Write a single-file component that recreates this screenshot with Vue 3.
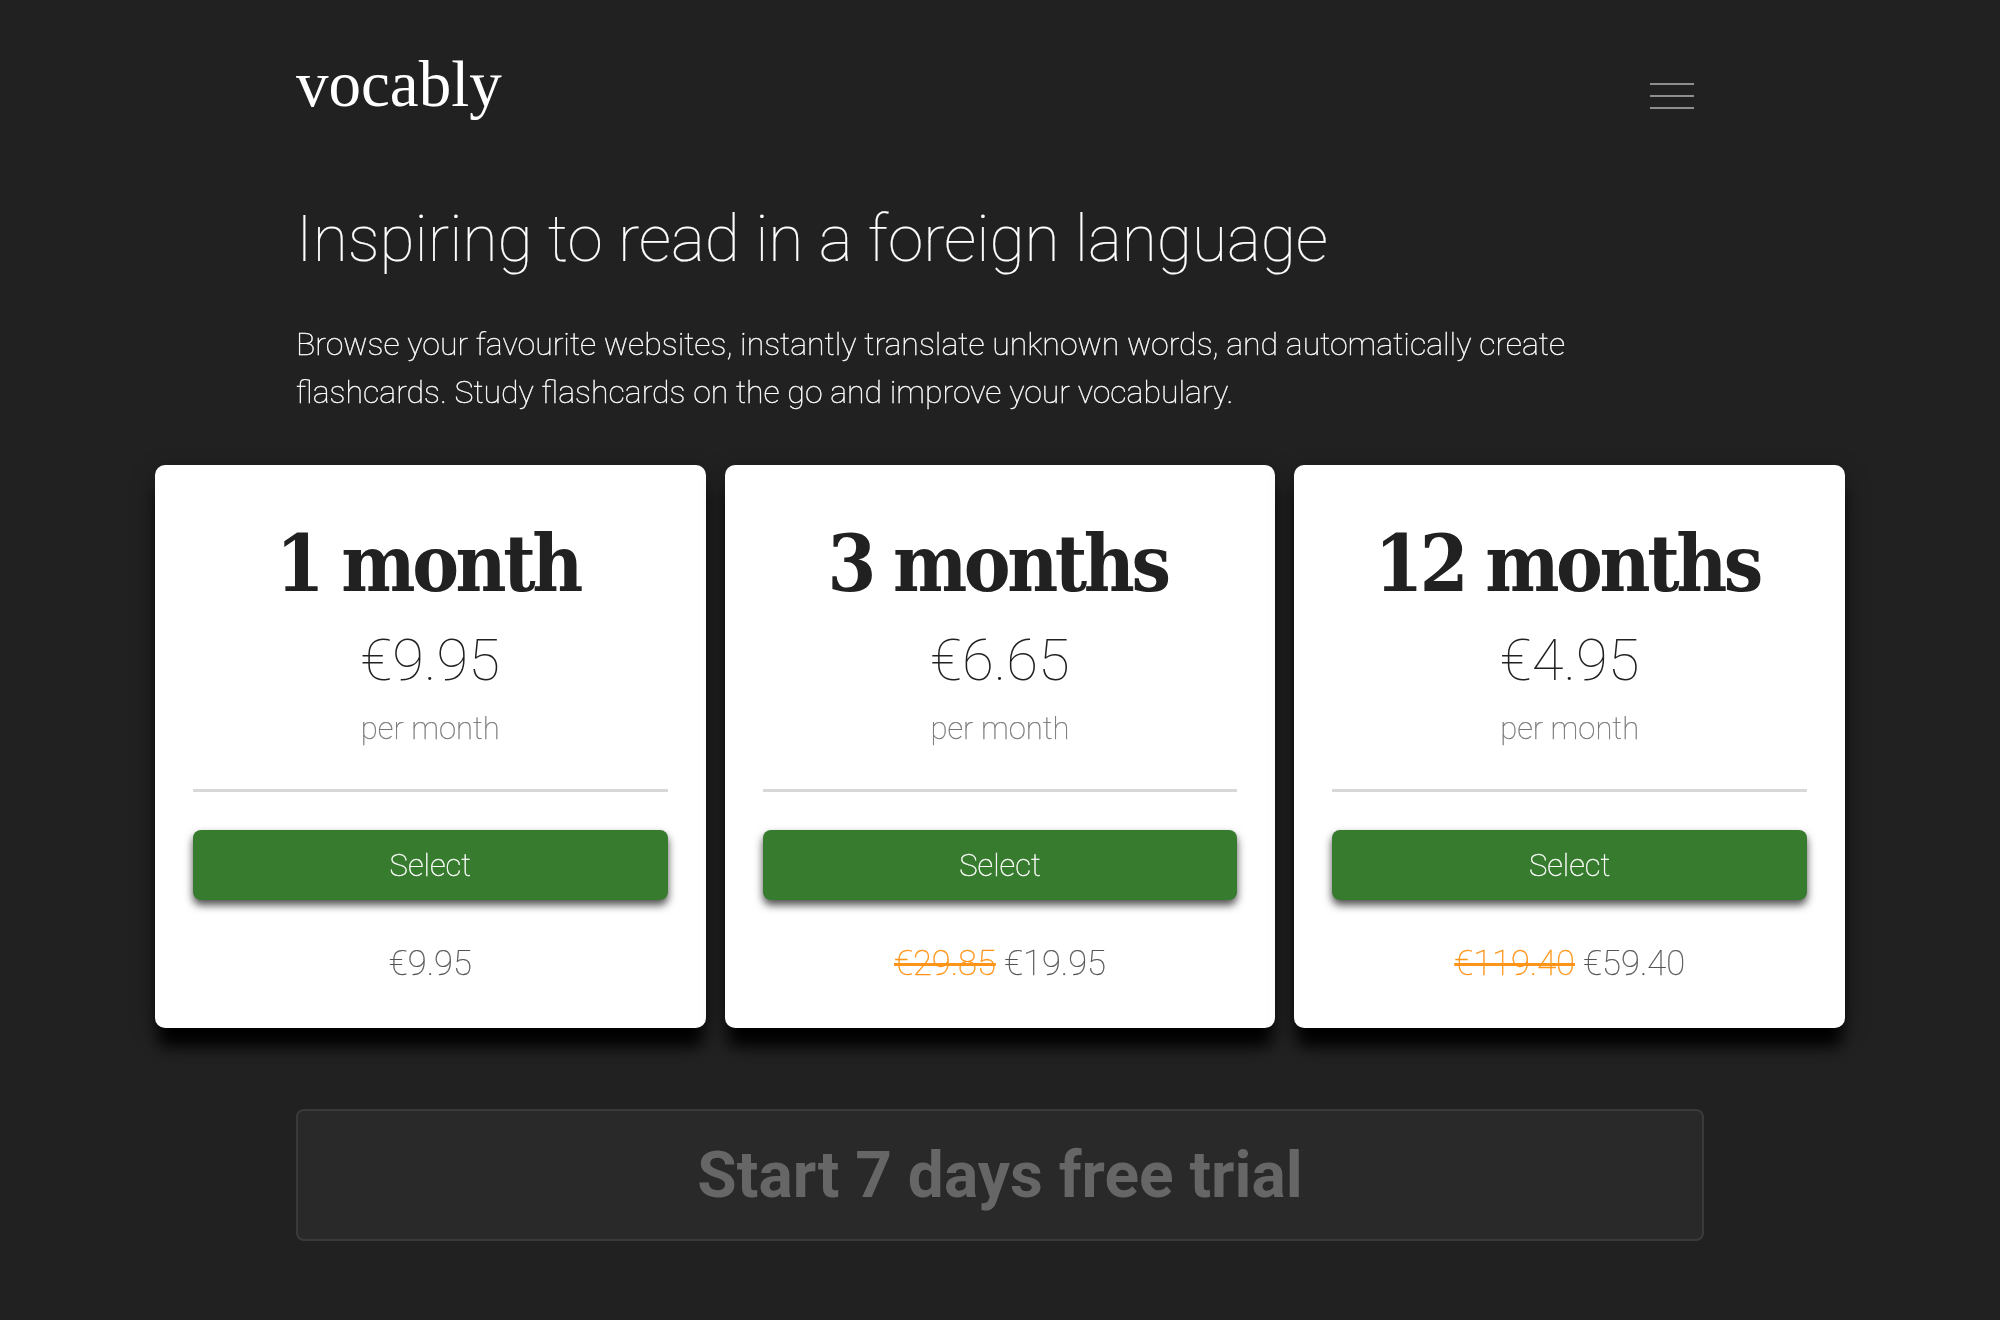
<template>
  <div class="page">
    <div class="intro">
      <header class="top">
        <div class="logo">vocably</div>
        <button class="burger" aria-label="Menu"><span></span><span></span><span></span></button>
      </header>
      <h1>Inspiring to read in a foreign language</h1>
      <p class="lead">Browse your favourite websites, instantly translate unknown words, and automatically create flashcards. Study flashcards on the go and improve your vocabulary.</p>
    </div>
    <div class="plans">
      <div v-for="plan in plans" :key="plan.name" class="card">
        <h2>{{ plan.name }}</h2>
        <div class="price">{{ plan.price }}</div>
        <div class="per">per month</div>
        <hr />
        <button class="select">Select</button>
        <div class="total"><template v-if="plan.old"><s>{{ plan.old }}</s>{{ ' ' }}</template>{{ plan.total }}</div>
      </div>
    </div>
    <div class="intro">
      <button class="trial" disabled>Start 7 days free trial</button>
    </div>
  </div>
</template>

<script setup>
const plans = [
  { name: '1 month', price: '€9.95', total: '€9.95' },
  { name: '3 months', price: '€6.65', old: '€29.85', total: '€19.95' },
  { name: '12 months', price: '€4.95', old: '€119.40', total: '€59.40' },
]
</script>

<style>
html, body {
  background: #212121;
}
</style>

<style scoped>
.page {
  min-height: 1320px;
  box-sizing: border-box;
  font-family: Roboto, "Liberation Sans", sans-serif;
  font-weight: 100;
  color: #fff;
  will-change: transform;
}
.intro {
  width: 1408px;
  margin: 0 auto;
}
.top {
  display: flex;
  justify-content: space-between;
  align-items: flex-start;
  height: 130px;
}
.logo {
  font-family: "Liberation Serif", serif;
  font-size: 65px;
  line-height: 80px;
  margin-top: 44px;
}
.burger {
  width: 44px;
  height: 26px;
  margin: 83px 10px 0 0;
  padding: 0;
  border: 0;
  background: none;
  display: flex;
  flex-direction: column;
  justify-content: space-between;
}
.burger span {
  display: block;
  height: 2px;
  background: #8e8e8e;
}
h1 {
  font-size: 64px;
  font-weight: 100;
  line-height: 76px;
  margin: 72px 0 0;
  -webkit-text-stroke: 0.2px #fff;
}
.lead {
  font-size: 32px;
  font-weight: 100;
  line-height: 48px;
  margin: 42px 0 0;
  -webkit-text-stroke: 0.35px #fff;
}
.plans {
  width: 1690px;
  margin: 49px auto 0;
  display: grid;
  grid-template-columns: repeat(3, 1fr);
  gap: 19px;
}
.card {
  background: #fff;
  border-radius: 10px;
  box-shadow: 0 22px 16px -4px #000, 0 8px 24px rgba(0, 0, 0, 0.35);
  padding: 55px 38px 44px;
  color: #212121;
  text-align: center;
}
h2 {
  font-family: "DejaVu Serif", serif;
  font-stretch: condensed;
  font-size: 78px;
  font-weight: 700;
  letter-spacing: -3.4px;
  word-spacing: -1px;
  line-height: 88px;
  margin: 0;
  padding-right: 5px;
}
.price {
  font-size: 58px;
  font-weight: 100;
  line-height: 70px;
  margin-top: 17px;
}
.per {
  font-size: 31px;
  font-weight: 100;
  color: #757575;
  line-height: 40px;
  margin-top: 14px;
  -webkit-text-stroke: 0.25px #757575;
}
hr {
  border: 0;
  height: 3px;
  background: #d8d8d8;
  margin: 40px 0 38px;
}
.select {
  display: block;
  width: 100%;
  height: 70px;
  border: 0;
  border-radius: 8px;
  background: #377b2e;
  box-shadow: 0 5px 8px rgba(0, 0, 0, 0.7);
  color: #fff;
  font-family: inherit;
  font-weight: 100;
  font-size: 31px;
  -webkit-text-stroke: 0.35px #fff;
}
.total {
  font-size: 34.5px;
  font-weight: 100;
  color: #555;
  line-height: 40px;
  margin-top: 43px;
  padding-bottom: 1px;
  -webkit-text-stroke: 0.25px #555;
}
s {
  color: #ff9518;
  -webkit-text-stroke: 0.35px #ff9518;
  text-decoration-thickness: 3px;
}
.trial {
  display: block;
  width: 100%;
  height: 132px;
  margin-top: 81px;
  background: #292929;
  border: 2px solid #3a3a3a;
  border-radius: 8px;
  color: #666;
  font-family: inherit;
  font-size: 64px;
  font-weight: 700;
}
</style>
